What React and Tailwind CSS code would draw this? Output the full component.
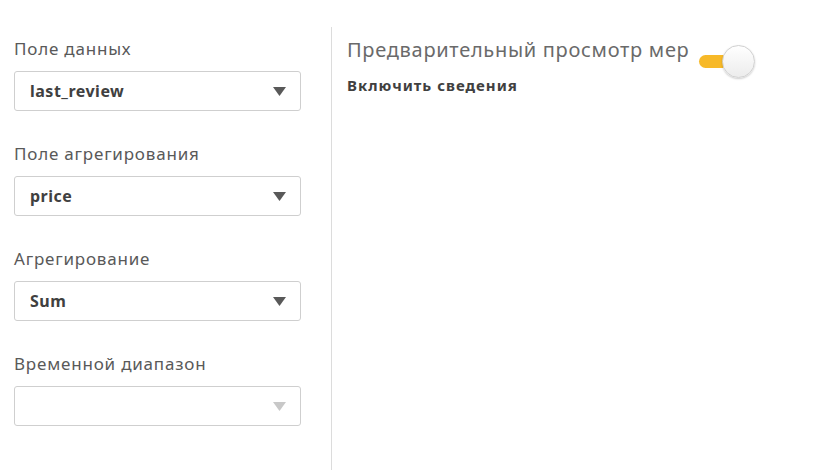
const fields = [
  { label: 'Поле данных', value: 'last_review' },
  { label: 'Поле агрегирования', value: 'price' },
  { label: 'Агрегирование', value: 'Sum' },
  { label: 'Временной диапазон', value: '', disabled: true },
];

function Select({ value, disabled }) {
  return (
    <div className="flex h-[40px] w-[287px] items-center justify-between rounded-[3px] border border-[#cfcfcf] bg-white pl-[15px] pr-[14px]">
      <span className="text-[16px] font-bold tracking-[0.5px] text-[#404040]">{value}</span>
      <svg width="13" height="9" viewBox="0 0 13 9">
        <path d="M0 0h13L6.5 9z" fill={disabled ? '#c8c8c8' : '#595959'} />
      </svg>
    </div>
  );
}

export default function App() {
  return (
    <div className="flex h-[470px] w-[823px] bg-white font-['Noto_Sans',sans-serif]">
      <div className="flex w-[331px] flex-col gap-[32px] pl-[14px] pt-[38px]">
        {fields.map((f) => (
          <div key={f.label} className="flex flex-col gap-[11px]">
            <div className="text-[17px] leading-[22px] tracking-[0.8px] text-[#595959]">{f.label}</div>
            <Select value={f.value} disabled={f.disabled} />
          </div>
        ))}
      </div>
      <div className="mt-[27px] w-[1px] bg-[#dcdcdc]" />
      <div className="flex flex-col pl-[15px] pt-[36px]">
        <div className="flex items-start">
          <span className="text-[20px] leading-[28px] tracking-[0.7px] text-[#6a6a6a]">Предварительный просмотр мер</span>
          <div className="relative ml-[10px] mt-[9px] h-[33px] w-[57px]">
            <div className="absolute left-0 top-[10px] h-[13px] w-[34px] rounded-full bg-[#f7b928]" />
            <div className="absolute left-[23px] top-0 h-[33px] w-[33px] rounded-full border border-[#d0d0d0] bg-gradient-to-b from-white to-[#ececec] shadow-[0_1px_2px_rgba(0,0,0,0.2)]" />
          </div>
        </div>
        <div className="mt-[-3px] text-[15px] font-bold leading-[20px] tracking-[1px] text-[#404040]">Включить сведения</div>
      </div>
    </div>
  );
}
